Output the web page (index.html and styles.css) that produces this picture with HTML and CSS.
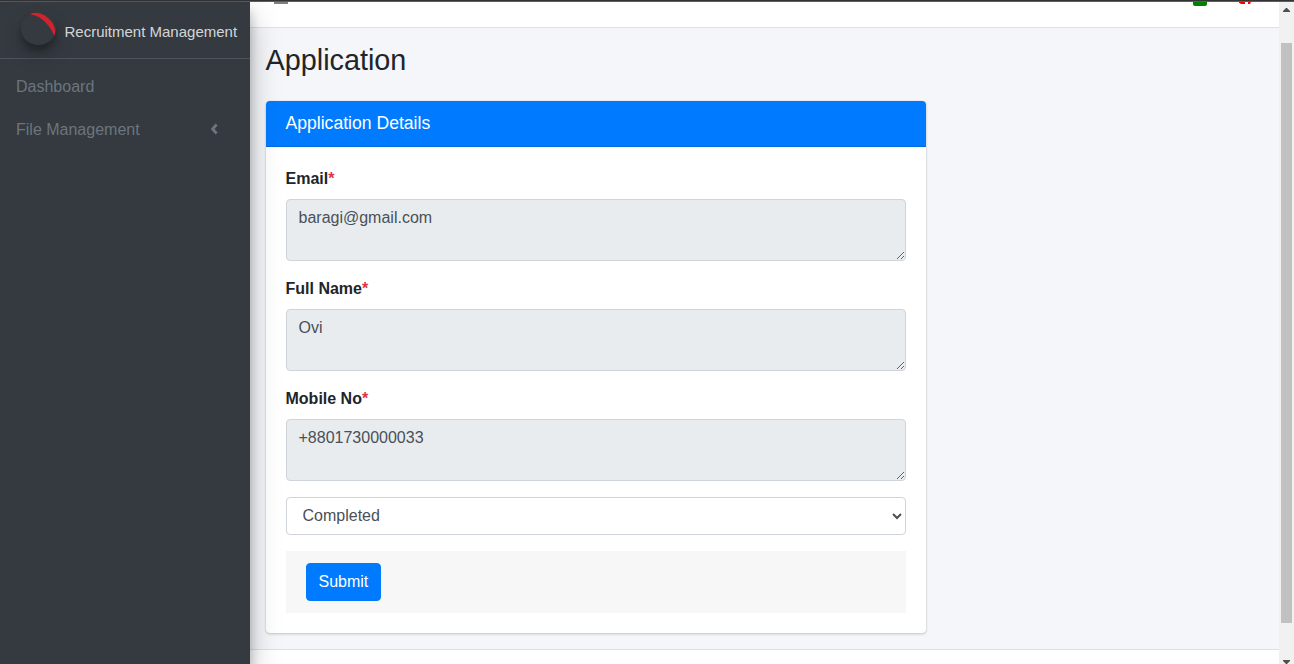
FILE: index.html
```html
<!DOCTYPE html>
<html lang="en">
<head>
<meta charset="utf-8">
<title>Recruitment Management</title>
<link rel="stylesheet" href="styles.css">
</head>
<body>
<div class="window-edge"></div>
<div class="app">
  <aside class="sidebar">
    <div class="brand">
      <svg class="brand-logo" width="35" height="33" viewBox="0 0 35 33"><path d="M8.500 2C13-.3 21 .3 27.500 6.500C33.500 12 35.500 19 34.300 24L33 23.500C30 15.500 22 4 8.500 2Z" fill="#d2232a"/></svg>
      <span class="brand-text">Recruitment Management</span>
    </div>
    <nav class="menu">
      <a class="menu-item">Dashboard</a>
      <a class="menu-item">File Management
        <svg class="menu-arrow" width="8" height="12" viewBox="0 0 8 12"><path d="M6.600 1.500L2.600 6l4 4.500" fill="none" stroke="currentColor" stroke-width="2.800"/></svg>
      </a>
    </nav>
  </aside>
  <main class="main">
    <header class="navbar">
      <span class="nav-toggle"></span>
      <span class="nav-user"></span>
      <svg class="nav-power" width="12" height="3" viewBox="0 0 12 3"><path d="M0 0h6v2H2L0 .8zM9 0h3l-1 2H9z" fill="#f00"/></svg>
    </header>
    <section class="content">
      <h1 class="title">Application</h1>
      <div class="card">
        <div class="card-header">Application Details</div>
        <form class="card-body">
          <label class="label">Email<span class="required">*</span></label>
          <textarea class="control" rows="2" readonly>baragi@gmail.com</textarea>
          <label class="label">Full Name<span class="required">*</span></label>
          <textarea class="control" rows="2" readonly>Ovi</textarea>
          <label class="label">Mobile No<span class="required">*</span></label>
          <textarea class="control" rows="2" readonly>+8801730000033</textarea>
          <select class="control select"><option>Completed</option></select>
          <div class="actions"><button class="submit" type="button">Submit</button></div>
        </form>
      </div>
    </section>
    <footer class="footer"></footer>
  </main>
  <div class="scrollbar">
    <svg class="arrow" width="7" height="4" viewBox="0 0 7 4"><path d="M0 4V3L3 0h1l3 3v1z" fill="#505050"/></svg>
    <div class="thumb"></div>
    <svg class="arrow arrow-down" width="7" height="4" viewBox="0 0 7 4"><path d="M0 0v1l3 3h1l3-3V0z" fill="#505050"/></svg>
  </div>
</div>
</body>
</html>
```
FILE: styles.css
```css
* { box-sizing: border-box; }
body {
  margin: 0;
  height: 664px;
  overflow: hidden;
  font: 16px/24px "Liberation Sans", Arial, sans-serif;
  color: #212529;
  background: #f4f6f9;
}
.window-edge { height: 2px; background: #343336; border-bottom: 1px solid #5d5b5c; }
.app { display: flex; height: 662px; }
.sidebar {
  position: relative;
  z-index: 1;
  width: 250px;
  flex: none;
  background: #343a40;
  box-shadow: 0 14px 28px rgba(0,0,0,.25), 0 10px 10px rgba(0,0,0,.22);
}
.brand {
  display: flex;
  height: 57px;
  padding: 10px 0 0 21px;
  border-bottom: 1px solid #4b545c;
}
.brand-logo {
  flex: none;
  width: 35px;
  height: 33px;
  border-radius: 50%;
  background: #343a40;
  box-shadow: 0 10px 20px rgba(0,0,0,.19), 0 6px 6px rgba(0,0,0,.23);
}
.brand-text {
  margin: 8px 0 0 8.5px;
  font-size: 15px;
  color: rgba(255,255,255,.8);
  white-space: nowrap;
}
.menu { padding-top: 8px; }
.menu-item {
  display: flex;
  align-items: center;
  height: 40px;
  margin-bottom: 3px;
  padding: 0 32px 0 16px;
  color: #6c757d;
}
.menu-arrow { margin: 0 0 2px auto; }
.main { flex: 1; display: flex; flex-direction: column; }
.navbar {
  display: flex;
  align-items: flex-start;
  height: 26px;
  flex: none;
  padding: 0 28px 0 24px;
  background: #fff;
  border-bottom: 1px solid #dee2e6;
}
.nav-toggle { width: 14px; height: 2px; background: #808080; }
.nav-user {
  width: 14px;
  height: 4px;
  margin: 0 32px 0 auto;
  border-radius: 0 0 2px 2px;
  background: #008000;
}
.content { height: 621px; flex: none; padding: 15px 15.5px 0; }
.title { margin: 0 0 23px; font-size: 28.8px; line-height: 35px; font-weight: 400; }
.card {
  width: 660.5px;
  border-radius: 4px;
  background: #fff;
  box-shadow: 0 0 1px rgba(0,0,0,.125), 0 1px 3px rgba(0,0,0,.2);
}
.card-header {
  height: 46px;
  padding: 10px 20px;
  border-bottom: 1px solid rgba(0,0,0,.125);
  border-radius: 4px 4px 0 0;
  background: #007bff;
  color: #fff;
  font-size: 17.6px;
}
.card-body { padding: 20px; }
.label { display: block; margin-bottom: 8px; font-weight: 700; }
.required { color: #dc3545; }
.control {
  display: block;
  width: 100%;
  height: 62px;
  margin: 0 0 16px;
  padding: 6px 12px;
  border: 1px solid #ced4da;
  border-radius: 4px;
  background: #e9ecef;
  color: #495057;
  font: inherit;
}
.select { height: 38px; padding: 5px 12px 7px; background: #fff; }
.actions { padding: 12px 20px; background: #f7f7f7; }
.submit {
  display: block;
  height: 38px;
  padding: 6px 12px;
  border: 1px solid #007bff;
  border-radius: 4px;
  background: #007bff;
  color: #fff;
  font: inherit;
}
.footer { flex: 1; background: #fff; border-top: 1px solid #dee2e6; }
.scrollbar {
  display: flex;
  flex-direction: column;
  align-items: center;
  width: 15px;
  flex: none;
  padding-top: 6px;
  background: #f1f1f1;
}
.arrow { flex: none; }
.thumb { width: 11px; height: 580px; flex: none; margin-top: 31px; background: #c1c1c1; }
.arrow-down { margin-top: 37px; }
```
